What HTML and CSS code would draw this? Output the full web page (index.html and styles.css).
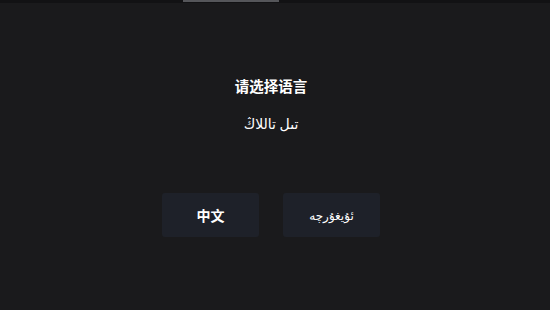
FILE: index.html
```html
<!DOCTYPE html>
<html lang="zh">
<head>
  <meta charset="UTF-8">
  <meta name="viewport" content="width=device-width, initial-scale=1.0">
  <title>请选择语言</title>
  <link rel="stylesheet" href="styles.css">
</head>
<body>
  <div class="top-bar">
    <div class="tab"></div>
  </div>

  <div class="container">
    <div class="title">请选择语言</div>
    <div class="subtitle" dir="rtl">تىل تاللاڭ</div>

    <div class="btn-group">
      <button class="lang-btn zh">中文</button>
      <button class="lang-btn ug" dir="rtl">ئۇيغۇرچە</button>
    </div>
  </div>
</body>
</html>
```

FILE: styles.css
```css
body {
  margin: 0;
  height: 310px;
  background-color: #1a1a1c;
  font-family: "Noto Sans", "Noto Sans CJK SC", "DejaVu Sans", sans-serif;
  color: #ffffff;
  overflow: hidden;
}

.top-bar {
  height: 3px;
  background-color: #121214;
  padding-left: 183px;
}

.tab {
  width: 96px;
  height: 2px;
  background-color: #55565a;
}

.container {
  display: flex;
  flex-direction: column;
  align-items: center;
  padding-right: 8px;
  padding-top: 73px;
}

.title {
  font-size: 14.5px;
  font-weight: bold;
  line-height: 20px;
}

.subtitle {
  margin-top: 17px;
  font-size: 14px;
  line-height: 22px;
}

.btn-group {
  display: flex;
  gap: 24px;
  margin-top: 58px;
}

.lang-btn {
  width: 97px;
  height: 44px;
  border: none;
  border-radius: 3px;
  background-color: #1e2129;
  color: #ffffff;
  font-family: inherit;
  cursor: pointer;
}

.lang-btn.zh {
  font-size: 14px;
  font-weight: bold;
}

.lang-btn.ug {
  font-size: 12px;
}
```
